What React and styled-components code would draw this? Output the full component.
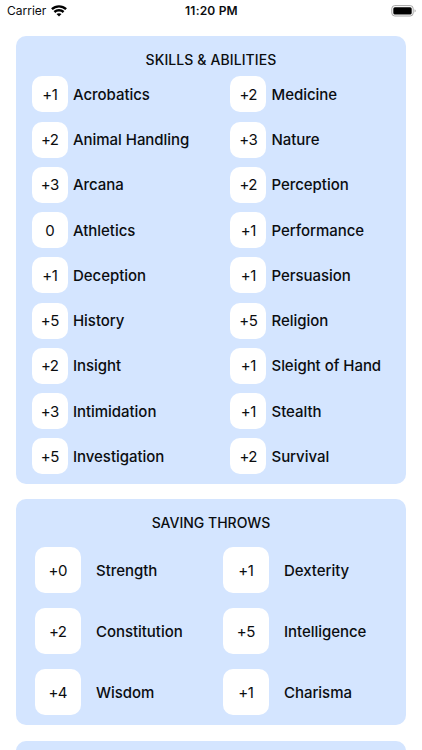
import React from "react";
import styled, { createGlobalStyle } from "styled-components";

const GlobalStyle = createGlobalStyle`
  * { box-sizing: border-box; }
  html, body { margin: 0; background: #fff; }
  body { overflow: hidden; }
`;

const Screen = styled.main`
  width: 422px;
  height: 750px;
  overflow: hidden;
  background: #fff;
  color: #0b0d10;
  font-family: Inter, "Liberation Sans", sans-serif;
`;

const StatusBar = styled.header`
  display: grid;
  grid-template-columns: 1fr auto 1fr;
  align-items: center;
  height: 22px;
  margin-bottom: 14px;
  padding: 0 6px 0 7px;
`;

const Carrier = styled.div`
  display: flex;
  align-items: center;
  gap: 5px;
  font-size: 12px;
  line-height: 22px;
`;

const Clock = styled.time`
  font-size: 12px;
  font-weight: 600;
  line-height: 22px;
  letter-spacing: 0.2px;
`;

const BatteryIcon = styled.svg`
  justify-self: end;
`;

const Sections = styled.div`
  display: flex;
  flex-direction: column;
  gap: 15.5px;
  padding: 0 15.6px;
`;

const Card = styled.section`
  flex: none;
  height: ${(p) => p.$height}px;
  padding-top: 15px;
  border-radius: 10px;
  background: #d4e5ff;
`;

const Title = styled.h2`
  margin: 0;
  font-size: 14px;
  font-weight: 500;
  line-height: 18px;
  letter-spacing: ${(p) => p.$tracking || 0}px;
  text-align: center;
`;

const SkillGrid = styled.div`
  display: grid;
  grid-template-columns: 198.5px 1fr;
  grid-auto-rows: 45.25px;
  padding: 7.3px 0 0 16.4px;
`;

const SaveGrid = styled.div`
  display: grid;
  grid-template-columns: 188px 1fr;
  grid-auto-rows: 61.1px;
  padding: 14.5px 0 0 19.4px;
`;

const Stat = styled.div`
  display: flex;
  align-items: center;
  align-self: start;
  gap: ${(p) => p.$gap}px;
`;

const Modifier = styled.span`
  display: flex;
  flex: none;
  align-items: center;
  justify-content: center;
  width: ${(p) => p.$size}px;
  height: ${(p) => p.$size}px;
  padding-top: ${(p) => p.$drop}px;
  padding-right: 0.5px;
  border-radius: 10px;
  background: #fff;
  font-size: 15px;
  line-height: 20px;
  letter-spacing: -0.5px;
`;

const Label = styled.span`
  padding-top: ${(p) => p.$drop}px;
  font-size: 15px;
  font-weight: 500;
  line-height: 20px;
  letter-spacing: -0.04px;
  white-space: nowrap;
`;

const skills = [
  ["+1", "Acrobatics"], ["+2", "Medicine"],
  ["+2", "Animal Handling"], ["+3", "Nature"],
  ["+3", "Arcana"], ["+2", "Perception"],
  ["0", "Athletics"], ["+1", "Performance"],
  ["+1", "Deception"], ["+1", "Persuasion"],
  ["+5", "History"], ["+5", "Religion"],
  ["+2", "Insight"], ["+1", "Sleight of Hand"],
  ["+3", "Intimidation"], ["+1", "Stealth"],
  ["+5", "Investigation"], ["+2", "Survival"],
];

const saves = [
  ["+0", "Strength"], ["+1", "Dexterity"],
  ["+2", "Constitution"], ["+5", "Intelligence"],
  ["+4", "Wisdom"], ["+1", "Charisma"],
];

function StatList({ items, size, gap, drop }) {
  return items.map(([value, name]) => (
    <Stat key={name} $gap={gap}>
      <Modifier $size={size} $drop={drop}>{value}</Modifier>
      <Label $drop={drop}>{name}</Label>
    </Stat>
  ));
}

export default function App() {
  return (
    <>
      <GlobalStyle />
      <Screen>
        <StatusBar>
          <Carrier>
            Carrier
            <svg width="16" height="12" viewBox="0 0 16 12" fill="none" stroke="#000" strokeWidth="2.4">
              <path d="M.9 4.2C4.9.4 11.1.4 15.1 4.2" />
              <path d="M3.4 7C6 4.6 10 4.6 12.6 7" />
              <path d="M5.5 9.1C6.9 7.8 9.1 7.8 10.5 9.1L8 11.6Z" fill="#000" stroke="none" />
            </svg>
          </Carrier>
          <Clock>11:20 PM</Clock>
          <BatteryIcon width="25" height="12" viewBox="0 0 25 12">
            <rect x="0.8" y="0.6" width="21.4" height="10.4" rx="3" fill="#fff" stroke="#a5a5a5" />
            <rect x="2.3" y="2.2" width="18.4" height="7.3" rx="1.6" fill="#000" />
            <path d="M23.6 4.2C25 4.7 25 6.9 23.6 7.4Z" fill="#999" />
          </BatteryIcon>
        </StatusBar>
        <Sections>
          <Card $height={447.7}>
            <Title $tracking={0.1}>SKILLS &amp; ABILITIES</Title>
            <SkillGrid>
              <StatList items={skills} size={36} gap={5} drop={1.4} />
            </SkillGrid>
          </Card>
          <Card $height={226}>
            <Title>SAVING THROWS</Title>
            <SaveGrid>
              <StatList items={saves} size={46} gap={15} drop={2.4} />
            </SaveGrid>
          </Card>
          <Card $height={100} />
        </Sections>
      </Screen>
    </>
  );
}
